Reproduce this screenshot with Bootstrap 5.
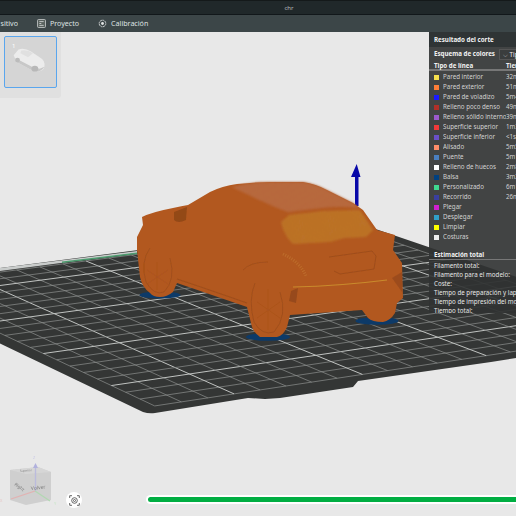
<!DOCTYPE html>
<html lang="es">
<head>
<meta charset="utf-8">
<title>chr</title>
<link href="https://cdn.jsdelivr.net/npm/bootstrap@5.3.0/dist/css/bootstrap.min.css" rel="stylesheet">
<style>
html,body{height:516px;width:516px;overflow:hidden;background:#e8e8e8;font-family:"Noto Sans","Open Sans",sans-serif}
.app-shell{height:516px}
.title-bar{height:15px;background:#20282a;color:#b9bdbe;font-size:6px;line-height:15px;border-top:1px solid #14191a;border-bottom:1px solid #11171a;padding-left:62px}
.tab-bar{height:17px;background:#3c4648;color:#dfe2e2;font-size:7.1px;line-height:17px;white-space:nowrap;overflow:hidden}
.tab-first{overflow:hidden;direction:rtl;text-align:right;width:18px}
.tab-item{gap:4px}
.tab-gap{gap:19px}
.viewport{height:484px}
.scene{position:absolute;inset:0;width:516px;height:484px;display:block}
.plate-tray{position:absolute;left:0;top:0;width:61px;height:66px;background:#e0e0e0;border-bottom-right-radius:3px}
.plate-thumb{position:absolute;left:4px;top:4px;width:53px;height:52px;background:#d5d5d5;border:1.5px solid #5aa6ee;border-radius:2px;color:#fff;font-size:6px;line-height:1}
.plate-thumb span{position:absolute;left:7px;top:6px}
.plate-thumb svg{position:absolute;inset:0;width:100%;height:100%}
.slice-panel{position:absolute;left:429px;top:0;width:87px;height:281px;background:rgba(48,50,50,.9);color:#d2d2d2;font-size:6.2px;line-height:9px;overflow:hidden;white-space:nowrap}
.panel-head{height:15px;background:#2f3435;color:#f2f2f2;font-weight:700;line-height:16px;padding-left:5px}
.panel-scheme{height:12px;padding-left:5px;color:#f2f2f2;font-weight:700;line-height:12px;margin-top:1px}
.scheme-select{margin-left:4px;height:11px;border:1px solid #555;background:#3a3d3d;font-weight:400;padding:0 0 0 3px;line-height:9px;width:40px;flex:none;overflow:hidden}
.panel-cols{height:11px;padding-left:5px;color:#f2f2f2;font-weight:700;line-height:11px;border-bottom:2px solid #777}
.panel-rows{padding-top:1px}
.legend-row{height:10px;line-height:10px;padding-left:5px}
.swatch{width:5px;height:5px;flex:none;margin-right:4px}
.col-label-wide{width:63px;flex:none;overflow:hidden}
.col-name{width:72px;flex:none}
.panel-sum{margin-top:7px;height:11px;line-height:11px;color:#f2f2f2;font-weight:700;padding-left:5px;border-bottom:1.5px solid #777}
.sum-rows{padding-top:1px;color:#e6e6e6}
.sum-row{height:9px;line-height:9px;padding-left:5px}
.cam-btn{position:absolute;left:66px;top:460px;width:16px;height:16px;border-radius:50%;background:#fff;display:flex;align-items:center;justify-content:center}
.slice-track{position:absolute;left:146px;top:463px;width:380px;height:9px;background:#fff;border-radius:5px;padding:2px 0 2px 2px}
.slice-fill{height:5px;background:#00ae42;border-radius:3px}
</style>
</head>
<body>
<div class="app-shell d-flex flex-column">
  <div class="title-bar text-center">chr</div>
  <nav class="tab-bar d-flex align-items-center tab-gap">
    <span class="tab-first">sitivo</span>
    <span class="tab-item d-flex align-items-center">
      <svg width="9" height="9" viewBox="0 0 9 9"><rect x=".5" y=".5" width="8" height="8" rx="1" fill="#59625f" stroke="#c9cdcd" stroke-width=".8"/><path d="M2.3 2.6h4.4M2.3 4.5h2M2.3 6.4h4.4" stroke="#d8dbdb" stroke-width=".8"/></svg>
      Proyecto</span>
    <span class="tab-item d-flex align-items-center">
      <svg width="9" height="9" viewBox="0 0 9 9"><circle cx="4.5" cy="4.5" r="3.3" fill="none" stroke="#d8dbdb" stroke-width=".9" stroke-dasharray="2 .5"/><circle cx="4.5" cy="4.5" r="1.4" fill="#e4e6e6"/></svg>
      Calibración</span>
  </nav>
  <main class="viewport position-relative">
    <svg class="scene" id="scene" viewBox="0 32 516 484" xmlns="http://www.w3.org/2000/svg">
      <defs>
        <pattern id="speckle" width="2.4" height="2.4" patternUnits="userSpaceOnUse" patternTransform="rotate(18)">
          <rect width="2.4" height="2.4" fill="#b5653a"/><circle cx="1" cy="1" r=".6" fill="#c47c50"/><circle cx="2" cy="2" r=".4" fill="#a85a2c"/>
        </pattern>
        <pattern id="weave" width="2.6" height="2.6" patternUnits="userSpaceOnUse" patternTransform="rotate(-12)">
          <rect width="2.6" height="2.6" fill="#b96f24"/><circle cx="1.1" cy="1.1" r=".7" fill="#cf9430"/>
        </pattern>
        <filter id="soft" x="-5%" y="-5%" width="110%" height="110%"><feGaussianBlur stdDeviation=".7"/></filter>
        <filter id="softer" x="-10%" y="-10%" width="120%" height="120%"><feGaussianBlur stdDeviation="1.3"/></filter>
      </defs>
      <path d="M-124 284 L355 222 L678 332 L491 362 L358 381 L353 387 L280 398 L265 399 L248 398 L155 413 Q149 414 143 412 Z" fill="#343635"/>
      <g id="grid"></g>
      <path d="M0 268 L137 251 L137 253 L0 271Z" fill="#c9cccb"/>
      <path d="M62 261.5 L137 252.6 L137 254 L62 263Z" fill="#4c9c6e"/>
      <ellipse cx="160" cy="295" rx="20.5" ry="3.6" fill="#0d3a68"/>
      <ellipse cx="268" cy="337" rx="22" ry="3.8" fill="#0d3a68"/>
      <ellipse cx="377" cy="321" rx="21.5" ry="3.8" fill="#0d3a68"/>
      <path d="M355 206 V177 H351 L356.7 164 L360.5 177 H358.5 V206Z" fill="#0808a8"/>
      <path d="M142 217 Q152 212 173 208 Q182 206 188 205 L210 192 Q222 186 237 184 Q255 182 270 182 L303 182 Q316 184 327 190 L353 203 L363 210 L377 230 L395 235 L393 250 L402 263 L403 298 L397 303 L395 313 Q390 321 383 322 Q372 322 368 318 L362 310 L290 315 L287 327 Q283 336 277 337 L260 337 Q254 333 252 327 L247 307 L177 283 L173 292 Q167 297 160 297 Q153 297 150 293 Q142 287 140 277 L137 250 L137 237 L143 225Z" fill="#b2581f"/>
      <g filter="url(#softer)">
        <path d="M232 187 Q250 182 270 182 L303 182 Q316 184 327 190 L353 203 L359 208 Q340 206 322 208 L288 212 L275 207 Q250 196 232 187Z" fill="url(#speckle)"/>
        <path d="M281 222 L289 215 L323 211 L360 210 L373 230 L366 237 L345 238 L330 242 L293 244 Q284 236 281 222Z" fill="url(#weave)" opacity=".85"/>
      </g>
      <g filter="url(#soft)">
        <path d="M329 257 L372 251 L376 256 L374 269 L340 274 L334 271" fill="none" stroke="#8f4518" stroke-width=".8" opacity=".7"/>
        <path d="M293 287 Q340 286 387 280" fill="none" stroke="#c98a2c" stroke-width="1.1"/>
        <path d="M291 291 L298 288 L296 303 L289 301Z" fill="#974a1b"/>
        <path d="M392 278 L402 272 L402 292Z" fill="#9c4c1c"/>
        <path d="M174 212 L187 207 L186 220 Q178 224 174 220Z" fill="#934818"/>
        <path d="M177 279 Q210 290 247 303" fill="none" stroke="#8f4518" stroke-width="1.2" opacity=".55"/>
        <path d="M243 270 Q250 262 268 262" fill="none" stroke="#8f4518" stroke-width="1" opacity=".45"/>
        <path d="M150 248 Q140 262 146 282 Q154 296 164 292 Q176 280 170 258" fill="none" stroke="#8f4518" stroke-width="1" opacity=".45"/>
        <path d="M255 283 Q248 300 254 322 Q262 336 274 332 Q288 316 280 292" fill="none" stroke="#8f4518" stroke-width="1" opacity=".5"/>
        <path d="M268 289 L268 330M257 302 L280 318M257 318 L280 302M157 262 L157 290M147 270 L168 284M147 284 L168 270" fill="none" stroke="#98491b" stroke-width=".6" opacity=".4"/>
        <path d="M283 254 Q300 262 306 276" fill="none" stroke="#c47c33" stroke-width="3" stroke-dasharray="1 1.4" opacity=".6"/>
      </g>
      <g opacity=".85">
        <path d="M10 470 L38 467 L51 472 L51 500 L26 505 L10 500Z" fill="#cbcbcb"/>
        <path d="M10 470 L38 467 L51 472 L26 474Z" fill="#d4d4d4"/>
        <line x1="35.5" y1="466" x2="35.5" y2="492" stroke="#b4b4dc" stroke-width="1.4"/>
        <path d="M33 468 L35.5 463 L38 468Z" fill="#a8a8dc"/>
        <line x1="35" y1="491" x2="11" y2="499" stroke="#e2a8a8" stroke-width="1.2"/>
        <line x1="35" y1="491" x2="50" y2="501" stroke="#a8d6a8" stroke-width="1.2"/>
        <text x="31" y="490" font-size="5" fill="#6a6a6a" transform="rotate(-6 31 490)" font-family="Noto Sans">Volver</text>
        <text x="14" y="485" font-size="4.5" fill="#6a6a6a" transform="rotate(35 14 485)" font-family="Noto Sans">Right</text>
        <text x="20" y="472" font-size="3" fill="#777" transform="rotate(-4 20 472)" font-family="Noto Sans">Superior</text>
        <text x="33" y="459" font-size="4" fill="#c3c3e6" font-family="Noto Sans">Z</text>
        <text x="0" y="502" font-size="4" fill="#e6c3c3" font-family="Noto Sans">X</text>
        <text x="54" y="505" font-size="4" fill="#c3e6c3" font-family="Noto Sans">Y</text>
      </g>
    </svg>

    <div class="plate-tray">
      <div class="plate-thumb"><span>1</span>
        <svg viewBox="0 0 53 52"><path d="M9 19 L14 13 Q20 11 27 15 L36 21 Q42 24 41 31 Q40 36 33 36 L27 34 L12 26Z" fill="#ececec"/><path d="M17 14 Q24 13 29 17 L24 21 L16 17Z" fill="#e0e0e0"/><path d="M12 26 L27 34 L33 36 Q38 36 41 31 L36 33 L28 31 L11 22Z" fill="#c8c8c8"/><ellipse cx="31" cy="33" rx="3.5" ry="3" fill="#b8b8b8"/><ellipse cx="13" cy="24" rx="2.5" ry="2.5" fill="#bcbcbc"/></svg>
      </div>
    </div>

    <aside class="slice-panel">
      <div class="panel-head">Resultado del corte</div>
      <div class="panel-scheme d-flex align-items-center">Esquema de colores<span class="scheme-select">⌵ Tipo de línea</span></div>
      <div class="panel-cols d-flex"><span class="col-name">Tipo de línea</span><span>Tiempo</span></div>
      <div class="panel-rows" id="rows">
        <div class="legend-row d-flex align-items-center"><i class="swatch" style="background:#f5df4d"></i><span class="col-label-wide">Pared interior</span><span>32m</span></div>
        <div class="legend-row d-flex align-items-center"><i class="swatch" style="background:#ff7d38"></i><span class="col-label-wide">Pared exterior</span><span>51m</span></div>
        <div class="legend-row d-flex align-items-center"><i class="swatch" style="background:#1a1aff"></i><span class="col-label-wide">Pared de voladizo</span><span>5m4</span></div>
        <div class="legend-row d-flex align-items-center"><i class="swatch" style="background:#b03029"></i><span class="col-label-wide">Relleno poco denso</span><span>49m</span></div>
        <div class="legend-row d-flex align-items-center"><i class="swatch" style="background:#9a5acd"></i><span class="col-label-wide">Relleno sólido interno</span><span>39m</span></div>
        <div class="legend-row d-flex align-items-center"><i class="swatch" style="background:#f23a3a"></i><span class="col-label-wide">Superficie superior</span><span>1m3</span></div>
        <div class="legend-row d-flex align-items-center"><i class="swatch" style="background:#6a50c8"></i><span class="col-label-wide">Superficie inferior</span><span>&lt;1s</span></div>
        <div class="legend-row d-flex align-items-center"><i class="swatch" style="background:#ff8d6a"></i><span class="col-label-wide">Alisado</span><span>5m5</span></div>
        <div class="legend-row d-flex align-items-center"><i class="swatch" style="background:#4a7fc0"></i><span class="col-label-wide">Puente</span><span>5m1</span></div>
        <div class="legend-row d-flex align-items-center"><i class="swatch" style="background:#fff"></i><span class="col-label-wide">Relleno de huecos</span><span>2m8</span></div>
        <div class="legend-row d-flex align-items-center"><i class="swatch" style="background:#004080"></i><span class="col-label-wide">Balsa</span><span>3m2</span></div>
        <div class="legend-row d-flex align-items-center"><i class="swatch" style="background:#40d890"></i><span class="col-label-wide">Personalizado</span><span>6m1</span></div>
        <div class="legend-row d-flex align-items-center"><i class="swatch" style="background:#3a3fa0"></i><span class="col-label-wide">Recorrido</span><span>26m</span></div>
        <div class="legend-row d-flex align-items-center"><i class="swatch" style="background:#d020d0"></i><span class="col-label-wide">Plegar</span></div>
        <div class="legend-row d-flex align-items-center"><i class="swatch" style="background:#30a0c8"></i><span class="col-label-wide">Desplegar</span></div>
        <div class="legend-row d-flex align-items-center"><i class="swatch" style="background:#ffff00"></i><span class="col-label-wide">Limpiar</span></div>
        <div class="legend-row d-flex align-items-center"><i class="swatch" style="background:#eeeeee"></i><span class="col-label-wide">Costuras</span></div>
      </div>
      <div class="panel-sum">Estimación total</div>
      <div class="sum-rows">
        <div class="sum-row">Filamento total:</div>
        <div class="sum-row">Filamento para el modelo:</div>
        <div class="sum-row">Coste:</div>
        <div class="sum-row">Tiempo de preparación y lapso de tiempo:</div>
        <div class="sum-row">Tiempo de impresión del modelo:</div>
        <div class="sum-row">Tiempo total:</div>
      </div>
    </aside>

    <button type="button" class="cam-btn border-0 p-0" aria-label="Cámara">
      <svg width="11" height="11" viewBox="0 0 11 11" fill="none" stroke="#555" stroke-width=".9"><path d="M.7 3V.7H3M8 .7h2.3V3M10.3 8v2.3H8M3 10.3H.7V8"/><circle cx="5.5" cy="5.5" r="2.8"/><circle cx="5.5" cy="5.5" r="1"/></svg>
    </button>
    <div class="slice-track"><div class="slice-fill"></div></div>
  </main>
</div>
<script src="https://cdn.jsdelivr.net/npm/bootstrap@5.3.0/dist/js/bootstrap.bundle.min.js"></script>
<script>
(function(){
  // proyección del cuadrado unidad sobre la placa (esquinas L, F, R, N)
  var p=[[-124,284],[355,222],[678,332],[147,413]];
  var x0=p[0][0],y0=p[0][1],x1=p[1][0],y1=p[1][1],x2=p[2][0],y2=p[2][1],x3=p[3][0],y3=p[3][1];
  var dx1=x1-x2,dx2=x3-x2,sx=x0-x1+x2-x3,dy1=y1-y2,dy2=y3-y2,sy=y0-y1+y2-y3;
  var det=dx1*dy2-dx2*dy1,g=(sx*dy2-dx2*sy)/det,h=(dx1*sy-sx*dy1)/det;
  var a=x1-x0+g*x1,b=x3-x0+h*x3,c=x0,d=y1-y0+g*y1,e=y3-y0+h*y3,f=y0;
  function m(u,v){var w=g*u+h*v+1;return [(a*u+b*v+c)/w,(d*u+e*v+f)/w];}
  var n=20,grid=document.getElementById('grid'),NS='http://www.w3.org/2000/svg',q=.03;
  function ln(A,B,major){var l=document.createElementNS(NS,'line');l.setAttribute('x1',A[0]);l.setAttribute('y1',A[1]);l.setAttribute('x2',B[0]);l.setAttribute('y2',B[1]);l.setAttribute('stroke',major?'#c0c3c1':'#8e918f');l.setAttribute('stroke-width',major?'1':'.7');grid.appendChild(l);}
  for(var i=0;i<=n;i++){var t=q+(1-2*q)*i/n,M=i%5===3;ln(m(t,q),m(t,1-q),M);var s=q+(1-2*q)*(n-i)/n;ln(m(q,s),m(1-q,s),M);}
})();
</script>
</body>
</html>
